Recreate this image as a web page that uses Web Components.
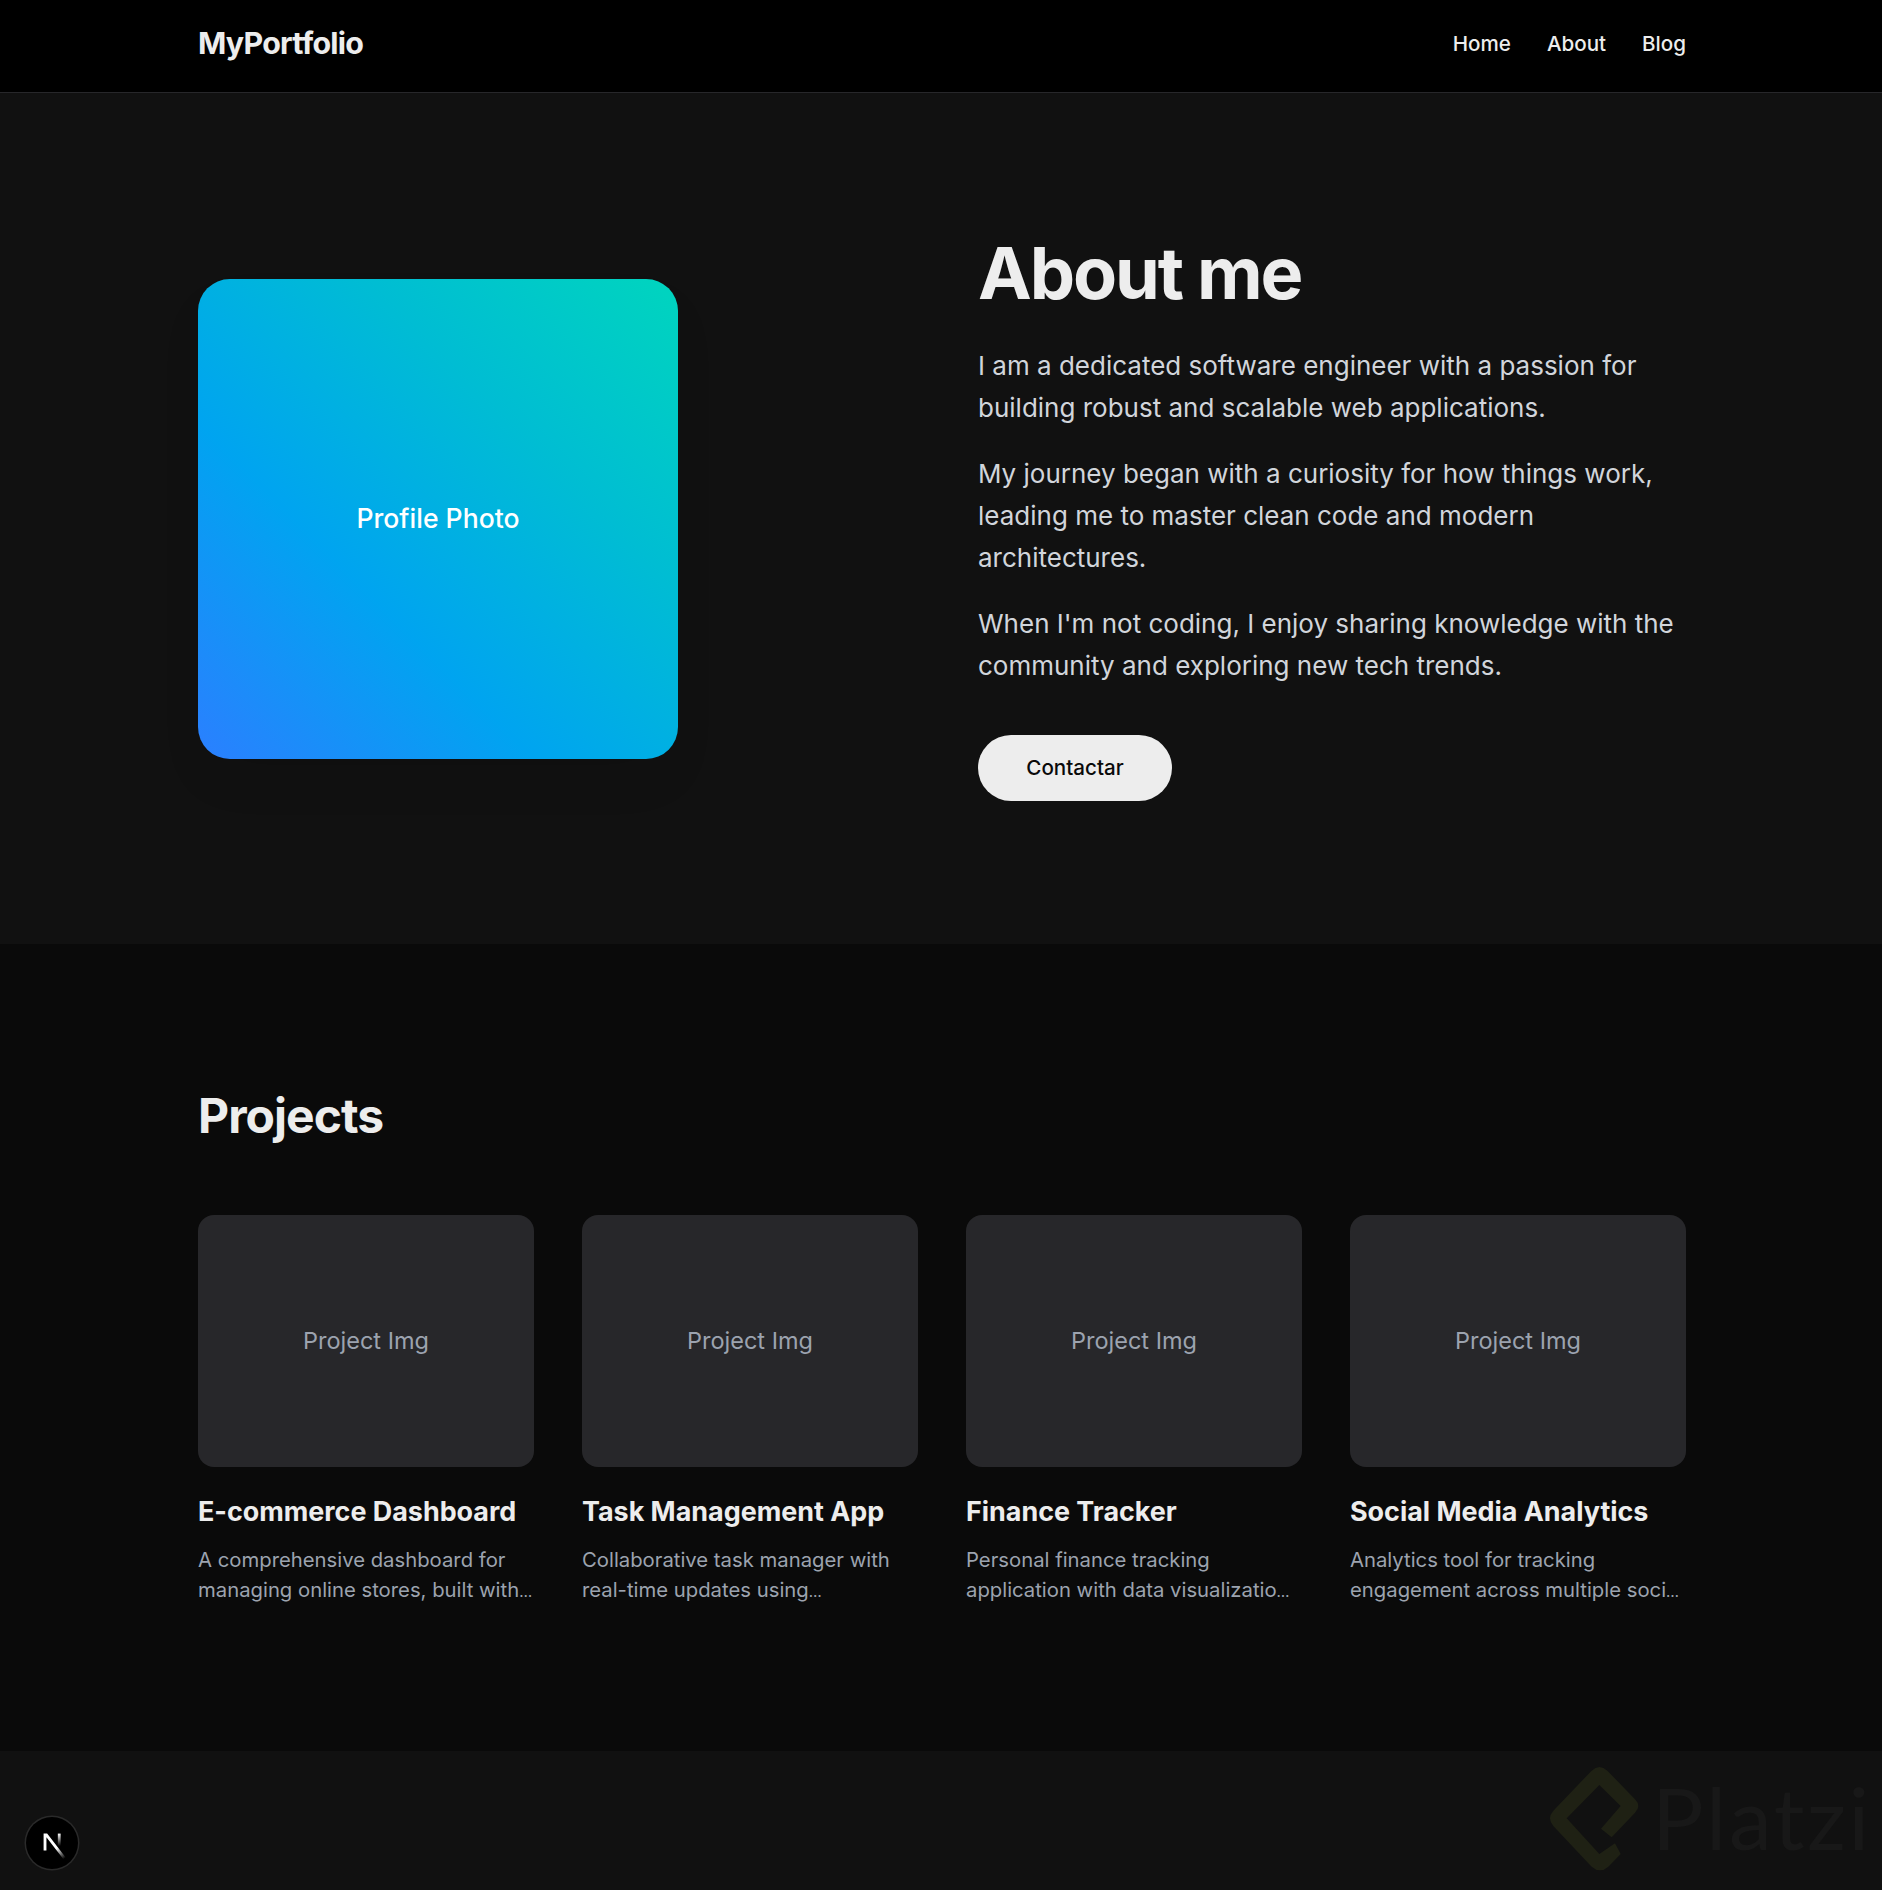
<!DOCTYPE html>
<html lang="en">
<head>
<meta charset="utf-8">
<title>MyPortfolio</title>
<style>
  html, body { margin: 0; background: #111111; }
  body { font-family: Inter, "Liberation Sans", sans-serif; color: #ededed; }
</style>
</head>
<body>
<site-header></site-header>
<about-section></about-section>
<projects-section>
  <project-card title="E-commerce Dashboard" text="A comprehensive dashboard for&#10;managing online stores, built with…"></project-card>
  <project-card title="Task Management App" text="Collaborative task manager with&#10;real-time updates using…"></project-card>
  <project-card title="Finance Tracker" text="Personal finance tracking&#10;application with data visualizatio…"></project-card>
  <project-card title="Social Media Analytics" text="Analytics tool for tracking&#10;engagement across multiple soci…"></project-card>
</projects-section>
<site-footer></site-footer>
<dev-badge></dev-badge>
<platzi-mark></platzi-mark>

<script>
class SiteHeader extends HTMLElement {
  constructor () {
    super()
    this.shadow = this.attachShadow({ mode: 'open' })
  }
  connectedCallback () {
    this.shadow.innerHTML = `
    <style>
      :host { display: block; background: #000; border-bottom: 1px solid #27272a; }
      .bar {
        width: 1488px; margin-left: 198px; height: 92px;
        display: flex; justify-content: space-between; align-items: center;
      }
      .logo { font-size: 30.4px; font-weight: 700; letter-spacing: -0.75px; color: #ededed; padding-bottom: 6px; }
      nav { display: flex; gap: 36px; padding-bottom: 5px; }
      a { color: #ededed; font-size: 20.6px; font-weight: 500; text-decoration: none; }
    </style>
    <div class="bar">
      <div class="logo">MyPortfolio</div>
      <nav><a href="#">Home</a><a href="#">About</a><a href="#">Blog</a></nav>
    </div>`
  }
}

class AboutSection extends HTMLElement {
  constructor () {
    super()
    this.shadow = this.attachShadow({ mode: 'open' })
  }
  connectedCallback () {
    this.shadow.innerHTML = `
    <style>
      :host { display: block; background: #111111; }
      .wrap {
        width: 1488px; margin-left: 198px; padding: 144px 0 143px;
        display: grid; grid-template-columns: 780px 708px; align-items: center;
      }
      .photo {
        width: 480px; height: 480px; border-radius: 32px; box-sizing: border-box; padding-bottom: 2px;
        background: linear-gradient(to top right, #2b7fff 0%, #00a4f0 35%, #00bdd3 68%, #00d5be 100%);
        box-shadow: 0 25px 50px -12px rgba(0,0,0,.1);
        display: flex; align-items: center; justify-content: center;
        color: #fff; font-size: 26.6px; font-weight: 500;
      }
      h1 { margin: 0 0 36px; font-size: 72px; line-height: 72px; font-weight: 700; letter-spacing: -2.1px; color: #ededed; }
      p { margin: 0 0 24px; font-size: 26px; line-height: 42px; color: #d1d5db; }
      button {
        display: block; margin-top: 48px; width: 194px; height: 66px; border: 0; border-radius: 33px; padding: 0 0 1px;
        background: #ededed; color: #0a0a0a; font: 500 20.6px Inter, "Liberation Sans", sans-serif;
      }
    </style>
    <div class="wrap">
      <div class="photo">Profile Photo</div>
      <div>
        <h1>About me</h1>
        <p>I am a dedicated software engineer with a passion for building robust and scalable web applications.</p>
        <p>My journey began with a curiosity for how things work, leading me to master clean code and modern architectures.</p>
        <p style="margin-bottom:0">When I'm not coding, I enjoy sharing knowledge with the community and exploring new tech trends.</p>
        <button>Contactar</button>
      </div>
    </div>`
  }
}

class ProjectsSection extends HTMLElement {
  constructor () {
    super()
    this.shadow = this.attachShadow({ mode: 'open' })
  }
  connectedCallback () {
    this.shadow.innerHTML = `
    <style>
      :host { display: block; background: #0a0a0a; }
      .wrap { width: 1488px; margin-left: 198px; padding: 148px 0 144px; }
      h2 { margin: 0 0 75px; font-size: 48px; line-height: 48px; font-weight: 700; letter-spacing: -0.95px; color: #ededed; }
      .grid { display: grid; grid-template-columns: repeat(4, 336px); gap: 48px; }
    </style>
    <div class="wrap">
      <h2>Projects</h2>
      <div class="grid"><slot></slot></div>
    </div>`
  }
}

class ProjectCard extends HTMLElement {
  constructor () {
    super()
    this.shadow = this.attachShadow({ mode: 'open' })
  }
  connectedCallback () {
    // one block per line, the last one ends in a smaller ellipsis
    const lines = this.getAttribute('text').split('\n').map((line) => {
      return `<div>${line.replace('…', '<span class="dots">…</span>')}</div>`
    }).join('')
    this.shadow.innerHTML = `
    <style>
      :host { display: block; }
      .img {
        height: 252px; box-sizing: border-box; padding-bottom: 2px; border-radius: 16px; background: #27272a; color: #9ca3af;
        display: flex; align-items: center; justify-content: center; font-size: 23.5px;
      }
      h3 { margin: 28px 0 18px; font-size: 26.9px; line-height: 32px; font-weight: 700; color: #ededed; }
      .text { font-size: 20.3px; line-height: 30px; color: #9ca3af; white-space: nowrap; }
      .dots { font-size: 15px; }
    </style>
    <div class="img">Project Img</div>
    <h3>${this.getAttribute('title')}</h3>
    <div class="text">${lines}</div>`
  }
}

class SiteFooter extends HTMLElement {
  constructor () {
    super()
    this.shadow = this.attachShadow({ mode: 'open' })
  }
  connectedCallback () {
    this.shadow.innerHTML = `
    <style>
      :host { display: block; height: 141px; background: #111111; }
    </style>`
  }
}

class DevBadge extends HTMLElement {
  constructor () {
    super()
    this.shadow = this.attachShadow({ mode: 'open' })
  }
  connectedCallback () {
    this.shadow.innerHTML = `
    <style>
      :host {
        position: absolute; left: 26px; top: 1817px; width: 52px; height: 52px; border-radius: 50%;
        background: #000; box-shadow: 0 0 0 1.5px #2a2a2a;
        display: flex; align-items: center; justify-content: center;
      }
      svg { margin: -2px 1px 0 0; }
    </style>
    <svg width="42" height="42" viewBox="0 0 180 180" fill="none">
      <defs>
        <linearGradient id="a" x1="109" y1="116.5" x2="144.5" y2="160.5" gradientUnits="userSpaceOnUse">
          <stop stop-color="#fff"/><stop offset="1" stop-color="#fff" stop-opacity="0"/>
        </linearGradient>
        <linearGradient id="b" x1="121" y1="54" x2="120.8" y2="106.9" gradientUnits="userSpaceOnUse">
          <stop stop-color="#fff"/><stop offset="1" stop-color="#fff" stop-opacity="0"/>
        </linearGradient>
      </defs>
      <path d="M149.508 157.52L69.142 54H54v71.97h12.114V69.384l73.885 95.461a90 90 0 0 0 9.509-7.325z" fill="url(#a)"/>
      <rect x="115" y="54" width="12" height="72" fill="url(#b)"/>
    </svg>`
  }
}

class PlatziMark extends HTMLElement {
  constructor () {
    super()
    this.shadow = this.attachShadow({ mode: 'open' })
  }
  connectedCallback () {
    this.shadow.innerHTML = `
    <style>
      :host { position: absolute; left: 1540px; top: 1756px; width: 342px; height: 134px; overflow: hidden; }
      svg { position: absolute; left: 0; top: 0; }
      span {
        position: absolute; left: 112px; top: 1px; font: 400 86px/120px Lato, sans-serif;
        color: #181818; letter-spacing: 2.6px;
      }
    </style>
    <svg width="110" height="120" viewBox="120 78 330 360">
      <path fill="#1f2114" d="M362 372 L325 410 Q300 432 275 410 L160 288 Q140 265 160 242 L275 122 Q298 100 322 122 L405 208 Q425 228 405 248 L335 322 L303 296 L362 228 L298 165 L200 265 L298 372 L345 340 Z"/>
    </svg>
    <span>Platzi</span>`
  }
}

customElements.define('site-header', SiteHeader)
customElements.define('about-section', AboutSection)
customElements.define('projects-section', ProjectsSection)
customElements.define('project-card', ProjectCard)
customElements.define('site-footer', SiteFooter)
customElements.define('dev-badge', DevBadge)
customElements.define('platzi-mark', PlatziMark)
</script>
</body>
</html>
